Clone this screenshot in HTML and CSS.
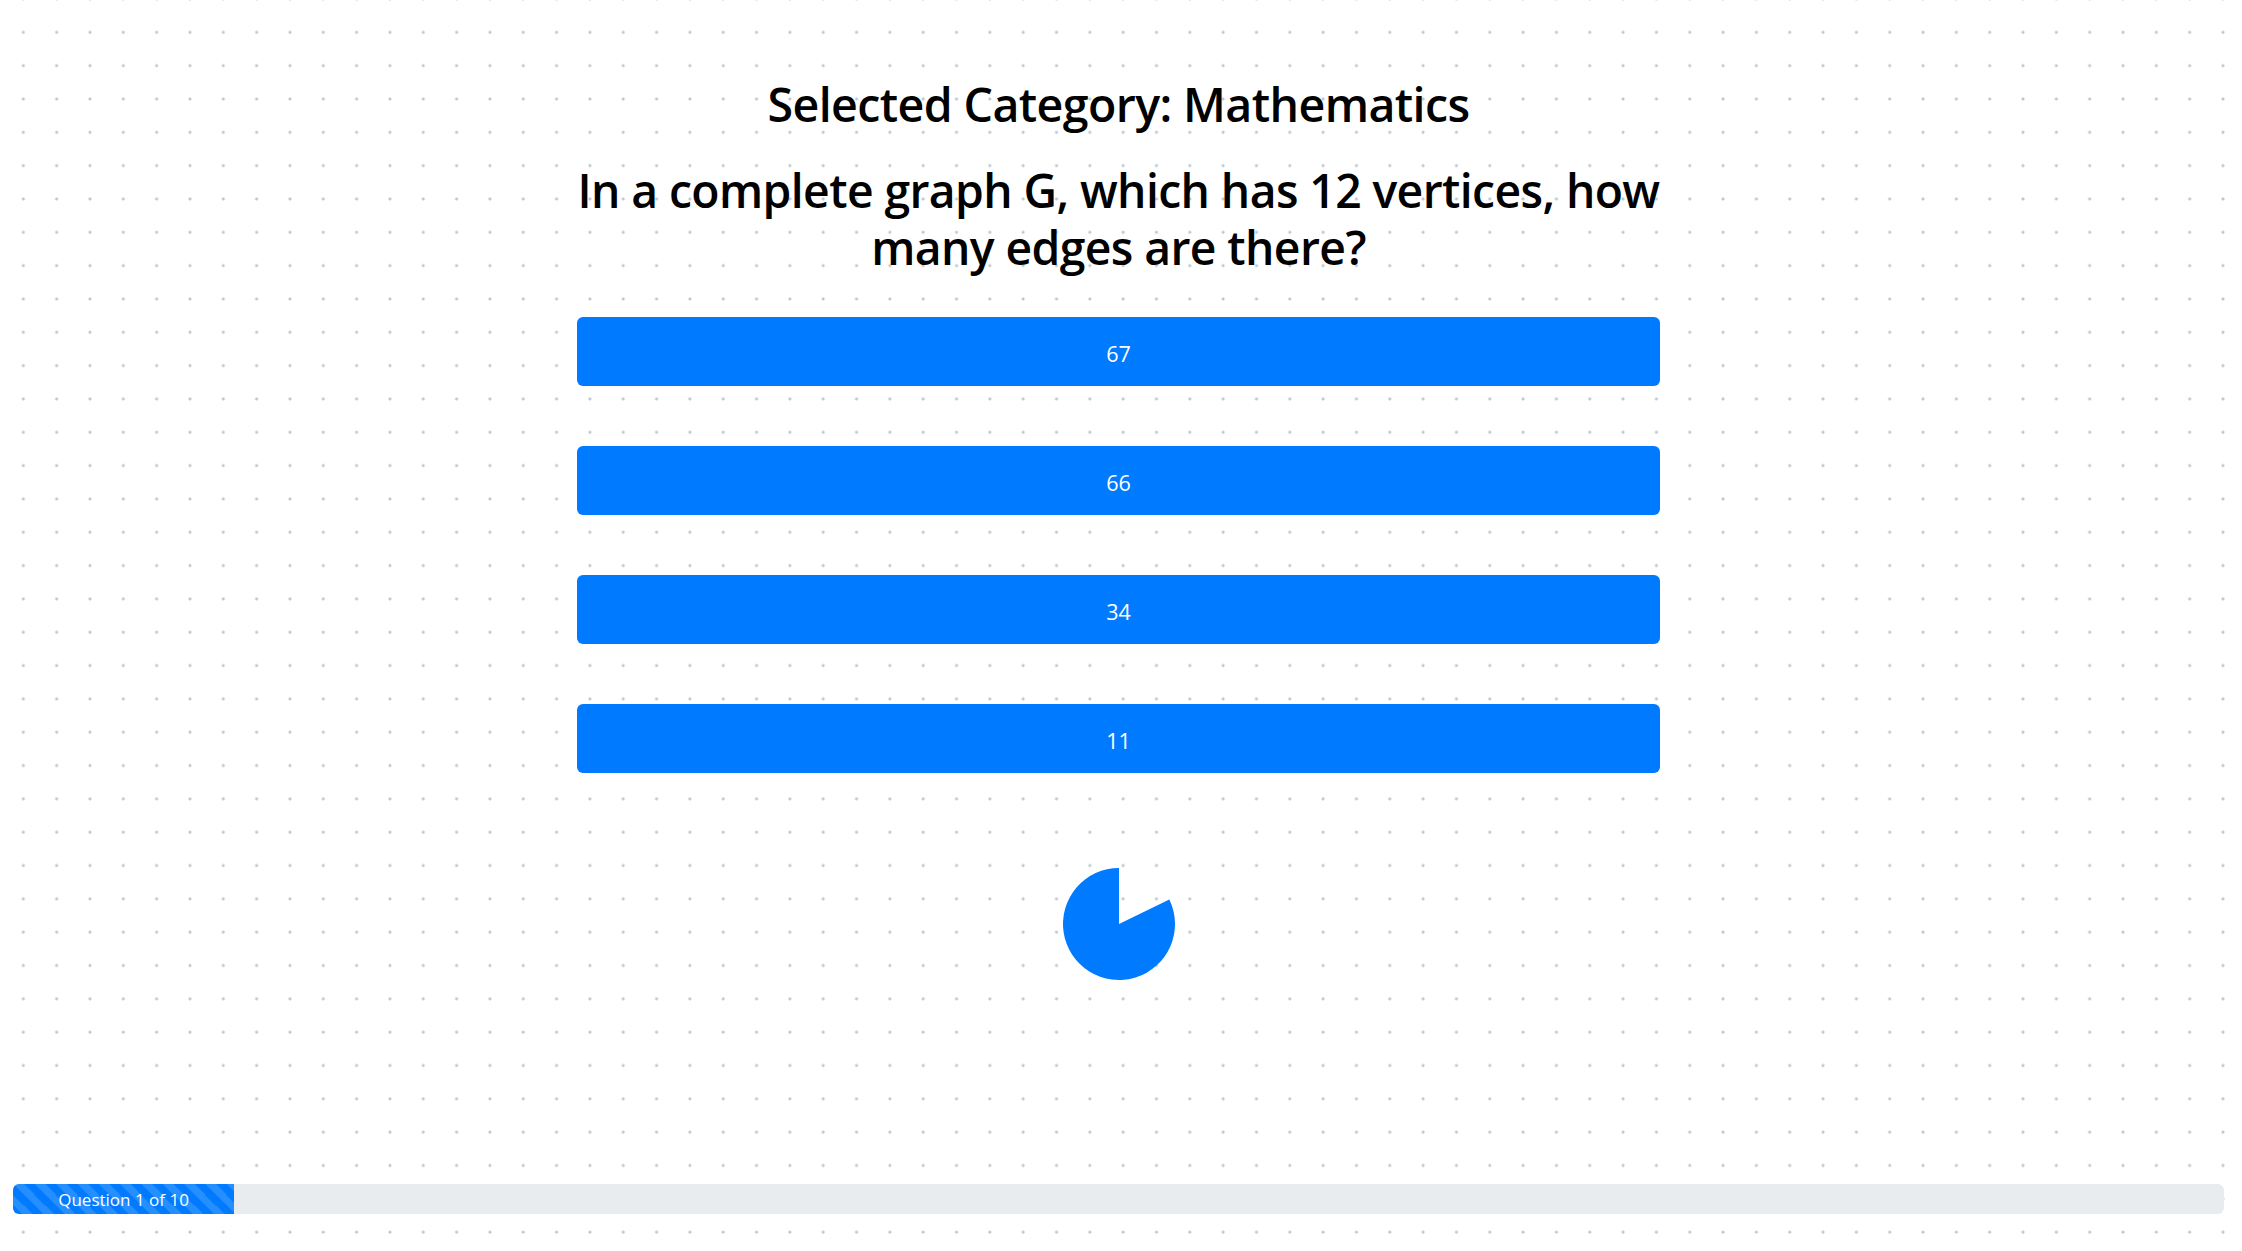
FILE: index.html
```html
<!DOCTYPE html>
<html lang="en">
<head>
<meta charset="utf-8">
<title>Quiz</title>
<link rel="stylesheet" href="styles.css">
</head>
<body>
<div class="page">
  <main class="quiz">
    <h2 class="category">Selected Category: Mathematics</h2>
    <h1 class="question">In a complete graph G, which has 12 vertices, how many edges are there?</h1>
    <div class="answers">
      <button class="answer">67</button>
      <button class="answer">66</button>
      <button class="answer">34</button>
      <button class="answer">11</button>
    </div>
    <div class="timer">
      <svg width="112" height="112" viewBox="0 0 112 112" aria-hidden="true">
        <path d="M56 56 L106.33 31.45 A56 56 0 1 1 56 0 Z" fill="#007bff"/>
      </svg>
    </div>
  </main>
  <footer class="progress-wrap">
    <div class="progress">
      <div class="progress-bar" style="width: 10%">Question 1 of 10</div>
    </div>
  </footer>
</div>
</body>
</html>
```
FILE: styles.css
```css
html, body {
  margin: 0;
  padding: 0;
}

body {
  background-color: #ffffff;
  background-image: radial-gradient(circle at center, #bcc7d2 0, #bcc7d2 1.1px, rgba(188,199,210,0) 1.9px);
  background-size: 33.333px 33.333px;
  background-position: 6.67px 15.67px;
  font-family: "Open Sans", "Noto Sans", sans-serif;
  color: #000;
}

.page {
  min-height: 1251px;
  display: flex;
  flex-direction: column;
}

.quiz {
  width: 1083px;
  margin: 0 auto;
  padding: 76.5px 5px 0 0;
  display: flex;
  flex-direction: column;
  align-items: stretch;
  text-align: center;
}

.category {
  margin: 0;
  font-size: 46.5px;
  font-weight: 600;
  line-height: 1.2;
  letter-spacing: -0.6px;
}

.question {
  margin: 30px -30px 0;
  font-size: 46.3px;
  font-weight: 600;
  line-height: 57px;
  letter-spacing: -0.6px;
}

.answers {
  margin-top: 41px;
  display: flex;
  flex-direction: column;
  gap: 60px;
}

.answer {
  display: flex;
  align-items: center;
  justify-content: center;
  height: 69px;
  width: 100%;
  border: 0;
  border-radius: 6px;
  background: #007bff;
  color: #fff;
  font-family: "Open Sans", "Noto Sans", sans-serif;
  font-size: 21.5px;
  font-weight: 400;
  padding: 4px 0 0;
}

.timer {
  margin-top: 95px;
  display: flex;
  justify-content: center;
}

.timer svg {
  display: block;
}

.progress-wrap {
  margin-top: auto;
  padding: 0 18px 37px 13px;
}

.progress {
  height: 30px;
  background: #e9ecef;
  border-radius: 6px;
  overflow: hidden;
  display: flex;
}

.progress-bar {
  display: flex;
  align-items: center;
  justify-content: center;
  background-color: #007bff;
  background-image: linear-gradient(45deg, rgba(255,255,255,.15) 25%, transparent 25%, transparent 50%, rgba(255,255,255,.15) 50%, rgba(255,255,255,.15) 75%, transparent 75%, transparent);
  background-size: 21.33px 21.33px;
  color: #fff;
  font-size: 17px;
  white-space: nowrap;
}
```
